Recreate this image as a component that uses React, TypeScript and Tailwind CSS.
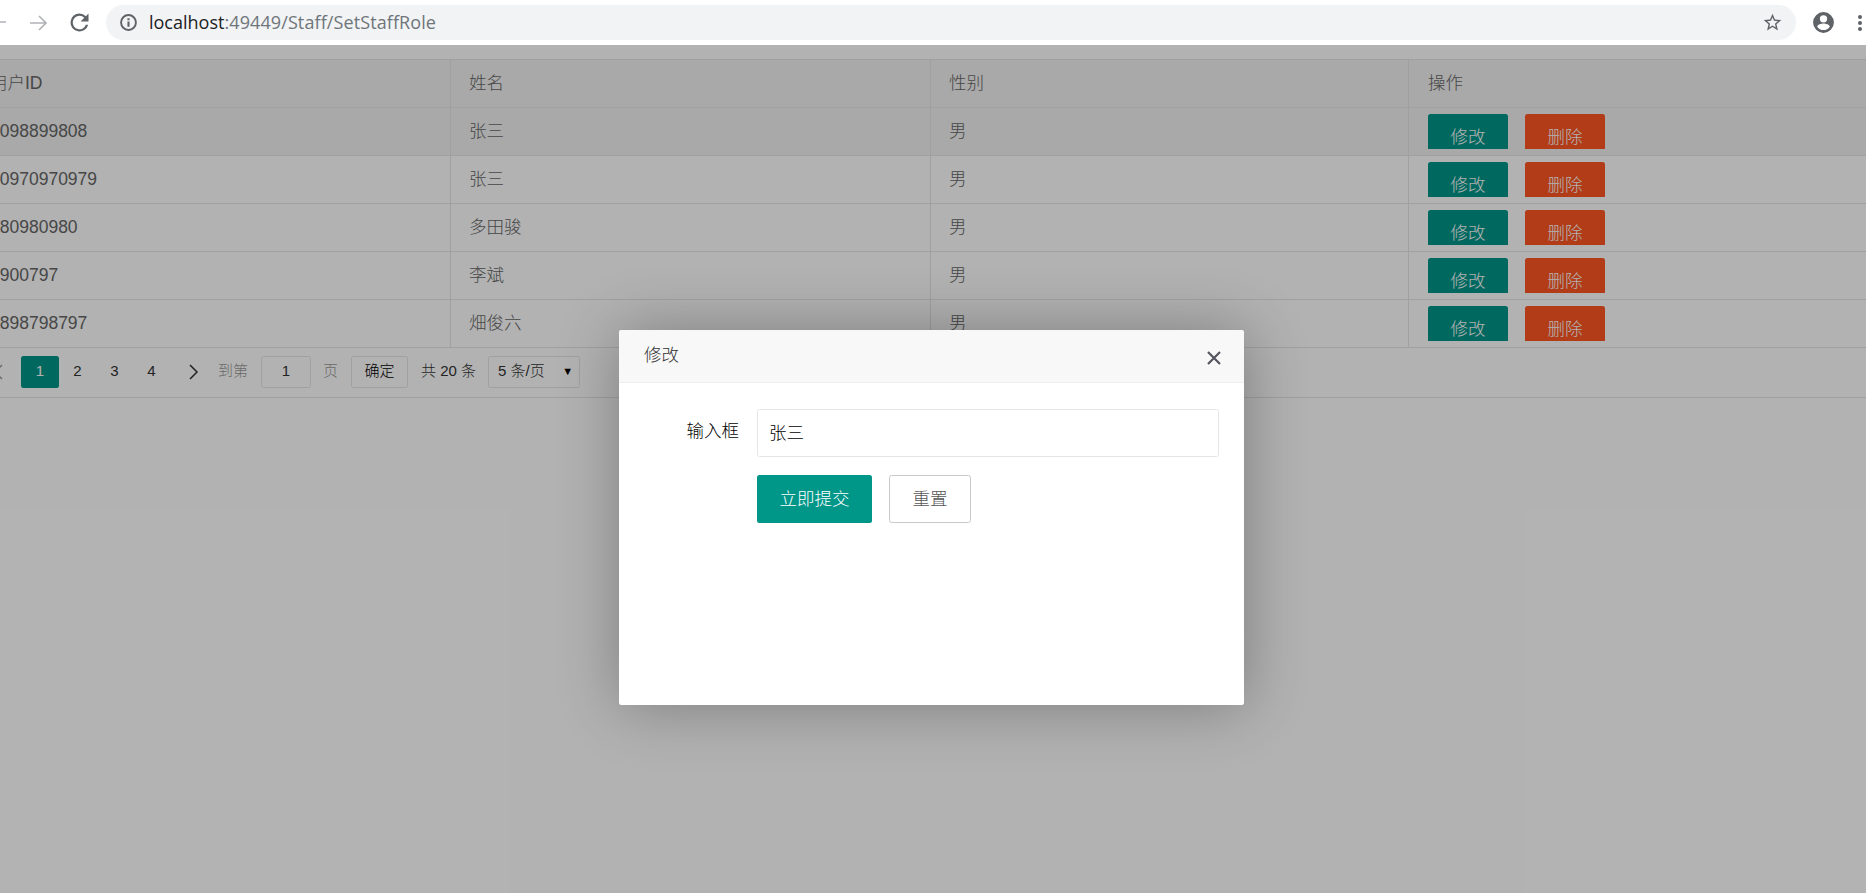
const staff = [
  { id: '1098899808', name: '张三' },
  { id: '10970970979', name: '张三' },
  { id: '880980980', name: '多田骏' },
  { id: '1900797', name: '李斌' },
  { id: '1898798797', name: '畑俊六' },
];

const cjk = "font-['Liberation_Sans','Noto_Sans_CJK_SC',sans-serif]";

function BrowserBar() {
  return (
    <div className="relative z-20 flex h-[45px] items-center bg-white pl-[30px]">
      {/* back arrow, mostly off the left edge */}
      <svg className="absolute left-[-10px] top-[14px] h-[16px] w-[16px]" viewBox="0 0 16 16" fill="none" stroke="#b0b3b6" strokeWidth="1.6">
        <path d="M16 8H1M8 1L1 8l7 7" />
      </svg>
      <svg className="h-[16px] w-[17px]" viewBox="0 0 17 16" fill="none" stroke="#b0b3b6" strokeWidth="1.6">
        <path d="M0 8h16M9 1l7 7-7 7" />
      </svg>
      <svg className="ml-[19px] h-[27px] w-[27px]" viewBox="0 0 24 24" fill="#5f6368">
        <path d="M17.65 6.35A7.96 7.96 0 0 0 12 4a8 8 0 1 0 7.73 10h-2.08A6 6 0 1 1 12 6c1.66 0 3.14.69 4.22 1.78L13 11h7V4z" />
      </svg>
      <div className="ml-[13px] flex h-[35px] w-[1690px] shrink-0 items-center rounded-full bg-[#f1f3f4] pl-[14px]">
        <svg className="h-[17px] w-[17px] shrink-0" viewBox="0 0 16 16" fill="none" stroke="#5f6368">
          <circle cx="8" cy="8" r="7" strokeWidth="1.8" />
          <path d="M8 7v5M8 4v1.8" strokeWidth="2" />
        </svg>
        <span className="ml-[12px] font-['Open_Sans',sans-serif] text-[18px] font-normal tracking-[0.1px] text-[#6f757a]">
          <span className="tracking-normal text-[#202124]">localhost</span>:49449/Staff/SetStaffRole
        </span>
        <svg className="ml-auto mr-[13px] h-[21px] w-[21px]" viewBox="0 0 24 24" fill="#5f6368">
          <path d="M22 9.24l-7.19-.62L12 2 9.19 8.63 2 9.24l5.46 4.73L5.82 21 12 17.27 18.18 21l-1.63-7.03L22 9.24zM12 15.4l-3.76 2.27 1-4.28-3.32-2.88 4.38-.38L12 6.1l1.71 4.04 4.38.38-3.32 2.88 1 4.28L12 15.4z" />
        </svg>
      </div>
      <svg className="ml-[15px] h-[25px] w-[25px] shrink-0" viewBox="0 0 24 24" fill="#5f6368">
        <path d="M12 2a10 10 0 1 0 0 20 10 10 0 0 0 0-20zm0 3a3.5 3.5 0 1 1 0 7 3.5 3.5 0 0 1 0-7zm0 14.2a7.2 7.2 0 0 1-6-3.22c.03-1.99 4-3.08 6-3.08s5.97 1.09 6 3.08a7.2 7.2 0 0 1-6 3.22z" />
      </svg>
      <svg className="ml-[21px] h-[18px] w-[6px] shrink-0" viewBox="0 0 6 18" fill="#5f6368">
        <circle cx="3" cy="3" r="2" />
        <circle cx="3" cy="9" r="2" />
        <circle cx="3" cy="15" r="2" />
      </svg>
    </div>
  );
}

function Row({ id, name, hovered }: { id: string; name: string; hovered?: boolean }) {
  return (
    <div className={`flex h-[48px] border-b border-[#e6e6e6] ${hovered ? 'bg-[#f2f2f2]' : ''}`}>
      <div className="flex w-[482px] items-center border-r border-[#e6e6e6] pl-[21px]">{id}</div>
      <div className="flex w-[480px] items-center border-r border-[#e6e6e6] pl-[18px]">{name}</div>
      <div className="flex w-[478px] items-center border-r border-[#e6e6e6] pl-[18px]">男</div>
      <div className="flex w-[480px] items-center pl-[19px]">
        <div className="h-[35px] overflow-hidden whitespace-nowrap">
          <button className="mr-[17px] h-[46.5px] w-[80px] rounded-[2.5px] bg-[#009688] text-white">修改</button>
          <button className="h-[46.5px] w-[80px] rounded-[2.5px] bg-[#ff5722] text-white">删除</button>
        </div>
      </div>
    </div>
  );
}

function Pagination() {
  return (
    <div className="flex h-[50px] items-center border-b border-[#e6e6e6] pb-[2px] text-[15px] text-[#333]">
      <svg className="ml-[-7px] mr-[18px] h-[16px] w-[10px]" viewBox="0 0 10 16" fill="none" stroke="#999" strokeWidth="1.5">
        <path d="M9 1L2 8l7 7" />
      </svg>
      <div className="flex h-[32px] w-[38px] items-center justify-center rounded-[2.5px] bg-[#009688] text-white">1</div>
      <div className="w-[37px] text-center">2</div>
      <div className="w-[37px] text-center">3</div>
      <div className="w-[37px] text-center">4</div>
      <svg className="ml-[19px] h-[16px] w-[10px]" viewBox="0 0 10 16" fill="none" stroke="#333" strokeWidth="1.5">
        <path d="M1 1l7 7-7 7" />
      </svg>
      <span className="ml-[19px] text-[#999]">到第</span>
      <div className="ml-[13px] flex h-[32px] w-[50px] items-center justify-center rounded-[2.5px] border border-[#e6e6e6]">1</div>
      <span className="ml-[12px] text-[#999]">页</span>
      <button className="ml-[13px] h-[32px] w-[57px] rounded-[2.5px] border border-[#e6e6e6] text-black">确定</button>
      <span className="ml-[13px]">共 20 条</span>
      <div className="ml-[12px] flex h-[32px] w-[92px] items-center justify-between rounded-[2.5px] border border-[#e6e6e6] pl-[9px] pr-[6px]">
        <span>5 条/页</span>
        <span className="text-[11px] text-black">▼</span>
      </div>
    </div>
  );
}

function Dialog() {
  return (
    <div className="absolute left-[619px] top-[285px] h-[375px] w-[625px] rounded-[2.5px] bg-white shadow-[1px_1px_62px_rgba(0,0,0,0.3)]">
      <div className="flex h-[53px] items-center justify-between rounded-t-[2.5px] border-b border-[#eee] bg-[#f8f8f8] pl-[25px] pr-[22px] text-[#333]">
        <span className="mb-[2px]">修改</span>
        <svg className="mt-[4px] h-[16px] w-[16px]" viewBox="0 0 16 16" fill="none" stroke="#55555f" strokeWidth="2.2">
          <path d="M2 2l12 12M14 2L2 14" />
        </svg>
      </div>
      <div className="px-[25px] pt-[26px]">
        <div className="flex items-start">
          <label className="w-[95px] pt-[9px] text-right text-black">输入框</label>
          <div className="ml-[18px] flex h-[48px] w-[462px] items-center rounded-[2.5px] border border-[#e6e6e6] px-[11px] text-black">张三</div>
        </div>
        <div className="ml-[113px] mt-[18px] flex gap-[17px]">
          <button className="h-[48px] w-[115px] rounded-[2.5px] bg-[#009688] text-white">立即提交</button>
          <button className="h-[48px] w-[82px] rounded-[2.5px] border border-[#c9c9c9] text-[#555]">重置</button>
        </div>
      </div>
    </div>
  );
}

export default function App() {
  return (
    <div className={`h-screen overflow-hidden bg-white text-[17.5px] font-light ${cjk}`}>
      <BrowserBar />
      <div className="relative h-[848px]">
        <div className="ml-[-31px] w-[1926px] pt-[14px]">
          <div className="border-t border-[#e6e6e6] text-[#666]">
            <div className="flex h-[48px] border-b border-[#e6e6e6] bg-[#f2f2f2]">
              <div className="flex w-[482px] items-center border-r border-[#e6e6e6] pl-[21px]">用户ID</div>
              <div className="flex w-[480px] items-center border-r border-[#e6e6e6] pl-[18px]">姓名</div>
              <div className="flex w-[478px] items-center border-r border-[#e6e6e6] pl-[18px]">性别</div>
              <div className="flex w-[480px] items-center pl-[19px]">操作</div>
            </div>
            {staff.map((s, i) => (
              <Row key={s.id} id={s.id} name={s.name} hovered={i === 0} />
            ))}
          </div>
          <div className="pl-[31px]">
            <Pagination />
          </div>
        </div>
        {/* shade over the page behind the dialog */}
        <div className="absolute inset-0 bg-black/30" />
        <Dialog />
      </div>
    </div>
  );
}
